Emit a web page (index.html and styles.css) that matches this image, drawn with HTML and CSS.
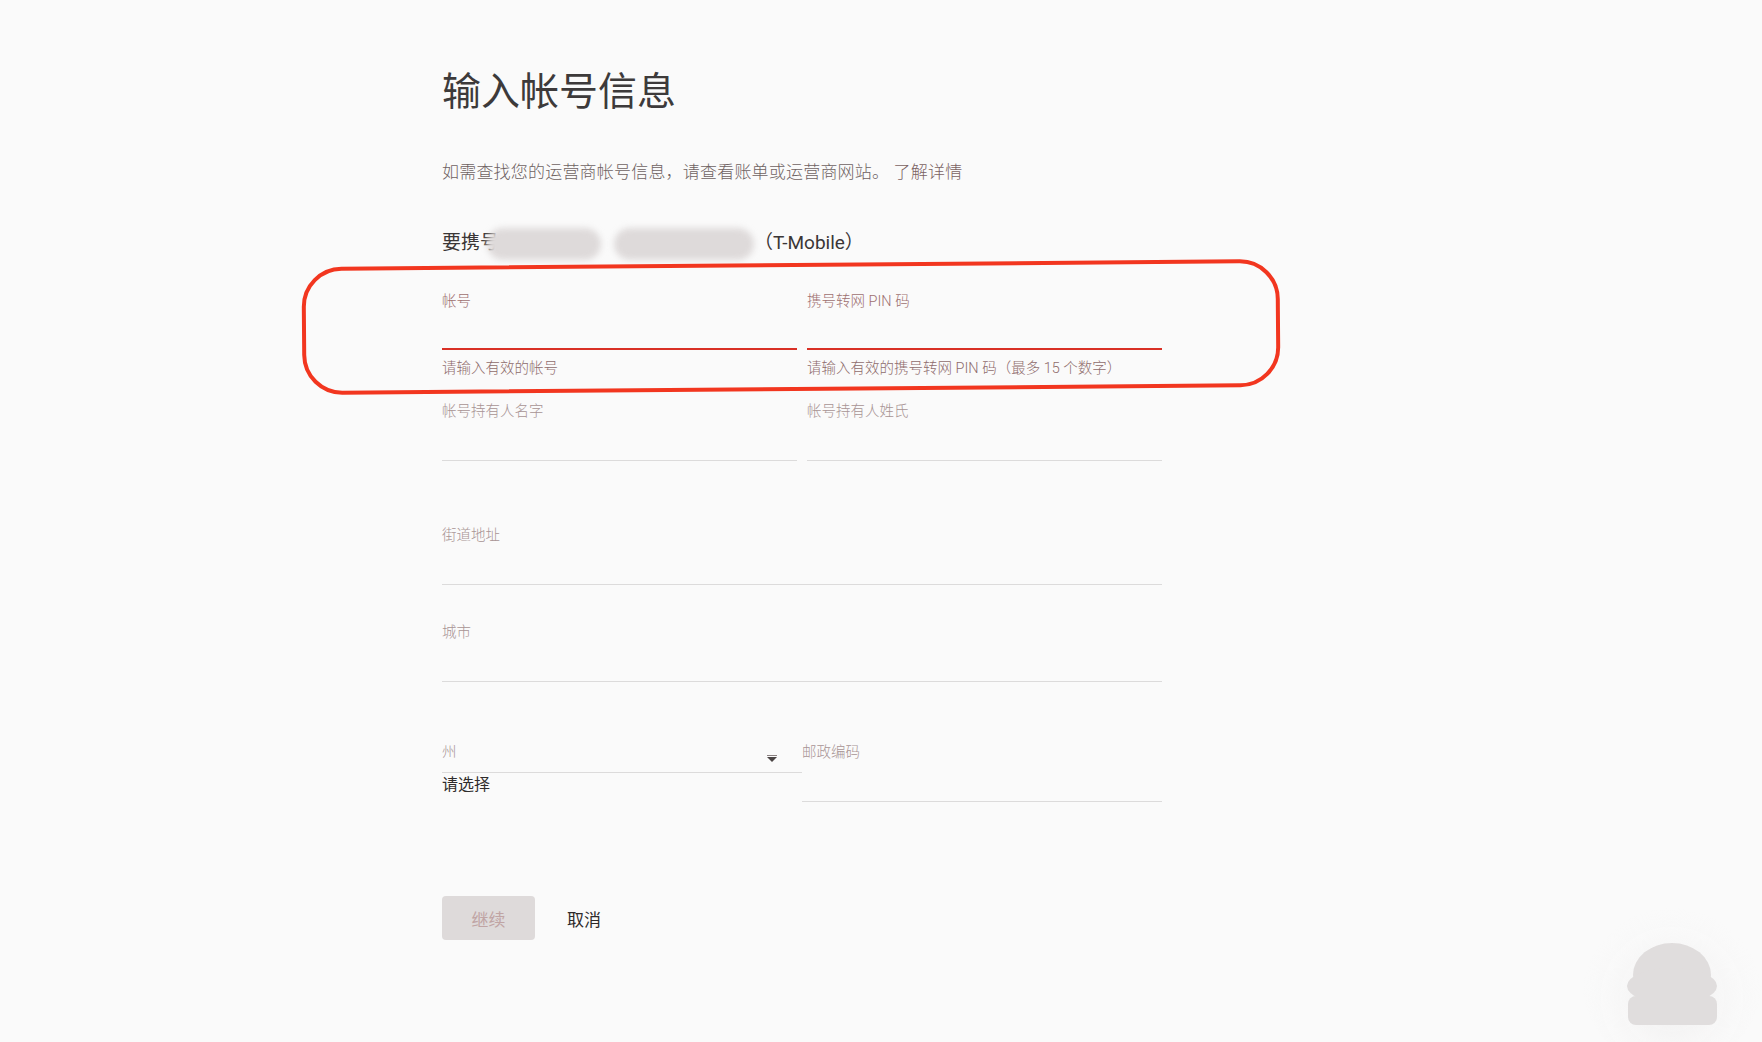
FILE: index.html
```html
<!DOCTYPE html>
<html lang="zh-CN">
<head>
  <meta charset="UTF-8">
  <title>输入帐号信息</title>
  <link rel="stylesheet" href="styles.css">
</head>
<body>
  <main class="page">
    <h1 class="title">输入帐号信息</h1>
    <p class="intro">如需查找您的运营商帐号信息，请查看账单或运营商网站。 <a class="learn" href="#">了解详情</a></p>
    <p class="port">要携号<span class="blur blur-a"></span><span class="blur blur-b"></span>（T-Mobile）</p>

    <div class="row pair first">
      <div class="field invalid">
        <label>帐号</label>
        <div class="line"></div>
        <div class="help">请输入有效的帐号</div>
      </div>
      <div class="field invalid">
        <label>携号转网 PIN 码</label>
        <div class="line"></div>
        <div class="help">请输入有效的携号转网 PIN 码（最多 15 个数字）</div>
      </div>
    </div>

    <div class="row pair names">
      <div class="field">
        <label>帐号持有人名字</label>
        <div class="line"></div>
      </div>
      <div class="field">
        <label>帐号持有人姓氏</label>
        <div class="line"></div>
      </div>
    </div>

    <div class="row street">
      <div class="field">
        <label>街道地址</label>
        <div class="line"></div>
      </div>
    </div>

    <div class="row city">
      <div class="field">
        <label>城市</label>
        <div class="line"></div>
      </div>
    </div>

    <div class="row split">
      <div class="field select">
        <div class="select-head">
          <label>州</label>
          <svg class="caret" width="10" height="7" viewBox="0 0 10 7">
            <rect x="0" y="0" width="10" height="1" fill="#8a8080"/>
            <path d="M0 2 L10 2 L5 7 Z" fill="#4a4444"/>
          </svg>
        </div>
        <div class="select-value">请选择</div>
      </div>
      <div class="field zip">
        <label>邮政编码</label>
        <div class="line"></div>
      </div>
    </div>

    <div class="actions">
      <button class="btn-continue" disabled>继续</button>
      <button class="btn-cancel">取消</button>
    </div>
  </main>

  <div class="mark"></div>

  <svg class="helper" width="180" height="162" viewBox="0 0 180 162">
    <defs>
      <radialGradient id="halo" cx="0.5" cy="0.6" r="0.5">
        <stop offset="0" stop-color="#ebe9e9" stop-opacity="0.8"/>
        <stop offset="1" stop-color="#fafafa" stop-opacity="0"/>
      </radialGradient>
    </defs>
    <circle cx="90" cy="100" r="90" fill="url(#halo)"/>
    <ellipse cx="90" cy="95" rx="39" ry="32" fill="#e0dddd"/>
    <ellipse cx="90" cy="106" rx="45" ry="18" fill="#e0dddd"/>
    <rect x="46" y="116" width="89" height="29" rx="8" fill="#e0dddd"/>
  </svg>
</body>
</html>
```

FILE: styles.css
```css
body {
  margin: 0;
  background: #fafafa;
  font-family: Roboto, "Noto Sans CJK SC", sans-serif;
  font-weight: 300;
  color: #3b3838;
}
.page {
  width: 720px;
  margin-left: 442px;
  padding-top: 68px;
}
.title {
  margin: 0;
  font-size: 39px;
  line-height: 48px;
  font-weight: 400;
  color: #3d3a3a;
}
.intro {
  margin: 44px 0 0;
  font-size: 17px;
  line-height: 24px;
  letter-spacing: 0.2px;
  color: #6e6262;
}
.learn {
  color: #7a6262;
  text-decoration: none;
}
.port {
  margin: 44px 0 0;
  font-size: 19px;
  line-height: 28px;
  font-weight: 400;
  color: #3a3636;
  white-space: nowrap;
}
.blur {
  display: inline-block;
  height: 32px;
  vertical-align: middle;
  background: #dedada;
  border-radius: 16px;
  filter: blur(3px);
}
.blur-a {
  width: 114px;
  margin-left: -12px;
}
.blur-b {
  width: 140px;
  margin-left: 13px;
}

.row.pair {
  display: grid;
  grid-template-columns: 355px 355px;
  column-gap: 10px;
}
.row.split {
  display: grid;
  grid-template-columns: 360px 360px;
}
.row.first { margin-top: 32px; }
.row.names { margin-top: 23px; }
.row.street { margin-top: 65px; }
.row.city { margin-top: 38px; }
.row.split { margin-top: 61px; }

.field label {
  display: block;
  font-size: 14.5px;
  line-height: 20px;
  color: #a89494;
}
.line {
  height: 38px;
  border-bottom: 1px solid #dcdbdb;
}
.field.invalid label {
  color: #9e7070;
}
.field.invalid .line {
  height: 36px;
  border-bottom: 2px solid #d93025;
}
.help {
  margin-top: 9px;
  font-size: 14.5px;
  line-height: 20px;
  color: #8f6c6c;
  white-space: nowrap;
}

.select-head {
  display: flex;
  justify-content: space-between;
  align-items: flex-end;
  height: 29px;
  padding-right: 25px;
  border-bottom: 1px solid #dcdbdb;
}
.select-head label {
  align-self: flex-start;
}
.caret {
  margin-bottom: 10px;
}
.select-value {
  margin-top: 1px;
  font-size: 16px;
  line-height: 22px;
  font-weight: 400;
  color: #2f2c2c;
}

.actions {
  display: flex;
  align-items: center;
  margin-top: 94px;
}
.btn-continue {
  width: 93px;
  height: 44px;
  border: none;
  border-radius: 4px;
  background: #dedada;
  color: #c0a4a4;
  font-family: inherit;
  font-size: 17px;
  font-weight: 400;
}
.btn-cancel {
  margin-left: 32px;
  padding: 0;
  border: none;
  background: none;
  color: #2e2a2a;
  font-family: inherit;
  font-size: 17px;
  font-weight: 400;
  cursor: pointer;
}

.mark {
  position: absolute;
  left: 302px;
  top: 263px;
  width: 978px;
  height: 128px;
  box-sizing: border-box;
  border: 4.5px solid #f2361f;
  border-radius: 40px;
  transform: rotate(-0.47deg);
}
.helper {
  position: fixed;
  right: 0;
  bottom: 0;
}
```
